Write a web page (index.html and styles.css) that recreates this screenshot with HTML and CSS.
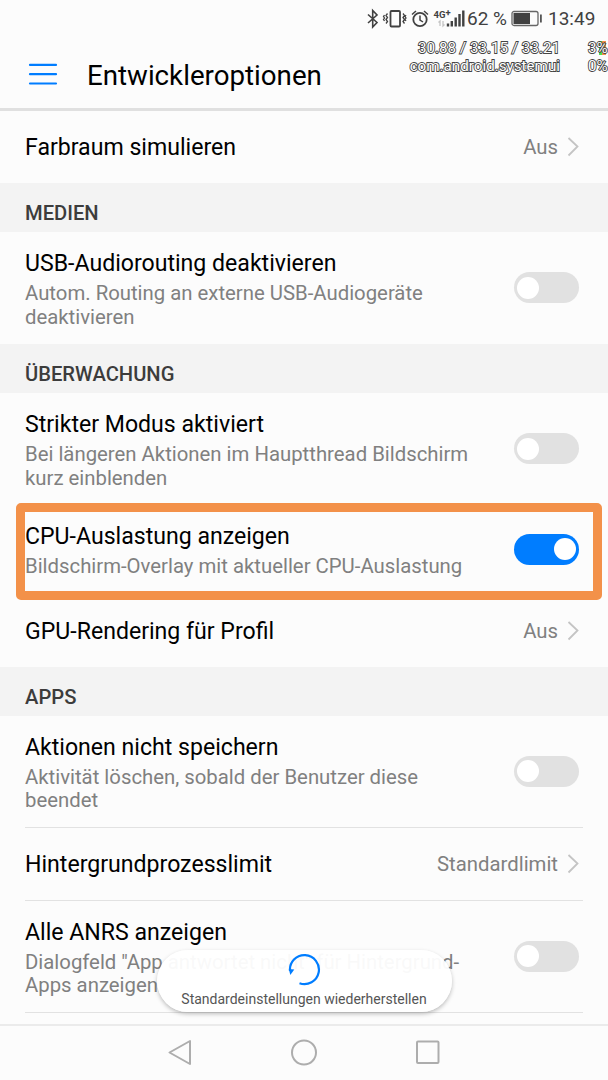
FILE: index.html
```html
<!DOCTYPE html>
<html lang="de">

<head>
    <meta charset="UTF-8">
    <meta name="viewport" content="width=device-width, initial-scale=1.0">
    <title>Entwickleroptionen</title>
    <link rel="stylesheet" href="styles.css">
</head>

<body>
    <div class="status-bar">
        <svg class="status-icons" width="106" height="24" viewBox="0 0 106 24" fill="none" stroke="#414141" stroke-width="1.6">
            <!-- Bluetooth -->
            <path d="M2 7.500l9 8-4.300 4.500V3.500L11 8l-9 8" />
            <!-- Vibration -->
            <rect x="24.500" y="4" width="9.500" height="15.500" rx="1" stroke-width="1.800" />
            <path d="M21.500 6.500l-1.500 2 1.500 2-1.500 2 1.500 2-1.500 2M18.500 8l-1 1.500 1 1.500-1 1.500 1 1.500M37 6.500l1.500 2-1.500 2 1.500 2-1.500 2 1.500 2M40 8l-1 1.500 1 1.500-1 1.500 1 1.500" stroke-width="1.300" />
            <!-- Wecker -->
            <circle cx="54" cy="12.500" r="6.700" stroke-width="1.800" />
            <path d="M54 8.500v4.500l3 2M46 7.500l4-3.500M62 7.500L58 4" stroke-width="1.500" />
            <!-- Signal -->
            <path d="M82 19.500v-3M85.800 19.500v-5.500M89.700 19.500v-9M93.500 19.500v-12.500M97.300 19.500V3.500" stroke-width="2.400" />
            <path d="M74 19v-5l-1.500 1.500M77 14v5l1.500-1.500" stroke="#c4c4c4" stroke-width="1.300" />
            <text class="network" x="67.500" y="10.500">4G<tspan dy="-2">+</tspan></text>
        </svg>
        <span class="battery-level">62 %</span>
        <svg class="battery" width="32" height="18" viewBox="0 0 32 18">
            <rect x="1" y="1.500" width="26" height="14" rx="2" fill="none" stroke="#666" stroke-width="1.300" />
            <rect x="2.500" y="3" width="16.500" height="11" fill="#414141" />
            <rect x="29" y="4.500" width="1.800" height="8" fill="#555" />
        </svg>
        <span class="clock">13:49</span>
    </div>

    <header class="app-bar">
        <svg class="menu-icon" width="30" height="24" viewBox="0 0 30 24" stroke="#007dff" stroke-width="2.200" stroke-linecap="round">
            <path d="M2 2.900h26M2 12.200h26M2 21.500h26" />
        </svg>
        <h1>Entwickleroptionen</h1>
    </header>

    <main class="settings">
        <div class="row single">
            <span class="title">Farbraum simulieren</span>
            <span class="value">Aus</span>
            <svg class="chevron" viewBox="0 0 12 20"><path d="M1.500 1L10.500 9.500l-9 9" /></svg>
        </div>

        <h2>MEDIEN</h2>
        <div class="row double">
            <div class="text">
                <div class="title">USB-Audiorouting deaktivieren</div>
                <div class="summary">Autom. Routing an externe USB-Audiogeräte<br>deaktivieren</div>
            </div>
            <span class="switch"></span>
        </div>

        <h2>ÜBERWACHUNG</h2>
        <div class="row double">
            <div class="text">
                <div class="title">Strikter Modus aktiviert</div>
                <div class="summary">Bei längeren Aktionen im Hauptthread Bildschirm<br>kurz einblenden</div>
            </div>
            <span class="switch"></span>
        </div>
        <div class="row cpu">
            <div class="text">
                <div class="title">CPU-Auslastung anzeigen</div>
                <div class="summary">Bildschirm-Overlay mit aktueller CPU-Auslastung</div>
            </div>
            <span class="switch on"></span>
            <div class="marker"></div>
        </div>
        <div class="row single gpu">
            <span class="title">GPU-Rendering für Profil</span>
            <span class="value">Aus</span>
            <svg class="chevron" viewBox="0 0 12 20"><path d="M1.500 1L10.500 9.500l-9 9" /></svg>
        </div>

        <h2>APPS</h2>
        <div class="row double divider">
            <div class="text">
                <div class="title">Aktionen nicht speichern</div>
                <div class="summary">Aktivität löschen, sobald der Benutzer diese<br>beendet</div>
            </div>
            <span class="switch"></span>
        </div>
        <div class="row single divider">
            <span class="title">Hintergrundprozesslimit</span>
            <span class="value">Standardlimit</span>
            <svg class="chevron" viewBox="0 0 12 20"><path d="M1.500 1L10.500 9.500l-9 9" /></svg>
        </div>
        <div class="row double divider">
            <div class="text">
                <div class="title">Alle ANRS anzeigen</div>
                <div class="summary">Dialogfeld "App antwortet nicht" für Hintergrund-<br>Apps anzeigen</div>
            </div>
            <span class="switch"></span>
        </div>
    </main>

    <nav class="nav-bar">
        <svg width="26" height="28" viewBox="0 0 26 28"><path d="M23 2v23L2.500 13.500z" /></svg>
        <svg width="28" height="28" viewBox="0 0 28 28"><circle cx="14" cy="13.500" r="12" /></svg>
        <svg width="26" height="26" viewBox="0 0 26 26"><rect x="2" y="1.500" width="21.500" height="21.500" rx="1" /></svg>
    </nav>

    <div class="reset-button">
        <svg width="34" height="34" viewBox="0 0 34 34">
            <path d="M12.500 31.300A14.500 14.500 0 1 0 3 19" fill="none" stroke="#007dff" stroke-width="2.200" />
            <path d="M1.800 17l5.500.500-4 5.500z" fill="#007dff" />
        </svg>
        <span>Standardeinstellungen wiederherstellen</span>
    </div>

    <div class="cpu-overlay">
        <div class="process"><span>30.88 / 33.15 / 33.21</span><span>com.android.systemui</span></div>
        <div class="load"><span>3%</span><span>0%</span></div>
        <i class="graph"></i>
    </div>
</body>
</html>
```

FILE: styles.css
```css
:root {
    --bg: #fcfcfc;
    --section-bg: #f3f3f3;
    --blue: #007dff;
    --grey-text: #808080;
    --line: #e2e2e2;
    --marker: #f39149;
}

* {
    box-sizing: border-box;
}

body {
    margin: 0;
    position: relative;
    display: flex;
    flex-direction: column;
    height: 1080px;
    overflow: hidden;
    background: var(--bg);
    color: #000;
    font-family: Roboto, sans-serif;
}

svg {
    display: block;
    flex: none;
}

.status-bar {
    display: flex;
    align-items: center;
    height: 37px;
    padding-left: 366px;
    color: #414141;
    font-size: 19px;
    white-space: nowrap;
}

.network {
    fill: #414141;
    stroke: none;
    font-size: 9.5px;
    font-weight: 700;
}

.battery-level {
    width: 39px;
    margin-left: -5px;
}

.battery {
    margin-left: 5px;
}

.clock {
    margin-left: 5px;
}

.app-bar {
    display: flex;
    align-items: center;
    height: 74px;
    padding: 3px 0 0 28px;
    border-bottom: 3px solid #e0e0e0;
}

h1 {
    margin: 2px 0 0 29px;
    font-size: 27.7px;
    font-weight: 400;
}

.settings {
    flex: 1;
}

h2 {
    height: 49px;
    margin: 0;
    padding: 6px 25px 0;
    background: var(--section-bg);
    color: #3c3c3c;
    font-size: 20.2px;
    font-weight: 500;
    line-height: 49px;
}

.row {
    position: relative;
    display: flex;
    align-items: center;
    margin: 0 25px;
}

.single {
    height: 72px;
}

.double {
    height: 112px;
}

.cpu {
    height: 89px;
}

.gpu {
    height: 73px;
}

.divider {
    border-bottom: 1px solid var(--line);
}

.single.divider {
    height: 73px;
}

.text {
    flex: 1;
    padding-top: 2px;
}

.title {
    flex: 1;
    font-size: 23.1px;
    line-height: 30px;
    white-space: nowrap;
}

.single .title {
    padding-top: 2px;
}

.summary {
    margin-top: 3px;
    color: var(--grey-text);
    font-size: 20.34px;
    line-height: 23.5px;
    white-space: nowrap;
}

.value {
    margin-right: 9px;
    color: var(--grey-text);
    font-size: 20.34px;
}

.chevron {
    width: 12px;
    height: 20px;
    margin-right: 4px;
    fill: none;
    stroke: #c4c4c4;
    stroke-width: 1.8;
}

.switch {
    flex: none;
    width: 65px;
    height: 31px;
    margin: 0 4.5px 1px 0;
    padding: 4.5px 3px;
    border-radius: 16px;
    background: #e1e1e1;
}

.switch::before {
    content: "";
    display: block;
    width: 22px;
    height: 22px;
    border-radius: 50%;
    background: #fff;
}

.switch.on {
    background: var(--blue);
}

.switch.on::before {
    margin-left: auto;
}

.marker {
    position: absolute;
    top: -2px;
    left: -9px;
    width: 586px;
    height: 97px;
    border: 9px solid var(--marker);
    border-radius: 5px;
}

.nav-bar {
    display: flex;
    align-items: center;
    justify-content: space-between;
    height: 56px;
    padding: 0 167px;
    border-top: 2px solid #ebebeb;
    background: var(--bg);
}

.nav-bar svg {
    fill: none;
    stroke: #adadad;
    stroke-width: 2;
    stroke-linejoin: round;
}

.reset-button {
    position: absolute;
    top: 950px;
    left: 156.5px;
    display: flex;
    flex-direction: column;
    align-items: center;
    width: 295px;
    height: 62px;
    padding-top: 2px;
    border-radius: 31px;
    background: rgba(255, 255, 255, 0.95);
    box-shadow: 0 2px 4px rgba(0, 0, 0, 0.25);
    color: #555;
    font-size: 14px;
    line-height: 26px;
    white-space: nowrap;
}

.cpu-overlay {
    position: absolute;
    top: 39px;
    right: 0;
    display: flex;
    gap: 28px;
    width: 200px;
    color: #fff;
    font-size: 15.2px;
    line-height: 18px;
    -webkit-text-stroke: 1.8px #444;
    paint-order: stroke fill;
    white-space: nowrap;
}

.process,
.load {
    display: flex;
    flex-direction: column;
}

.process {
    width: 152px;
    align-items: flex-end;
}

.graph {
    position: absolute;
    top: 2px;
    right: 2px;
    z-index: -1;
    width: 7px;
    height: 14px;
    background: linear-gradient(90deg, #4be04b 45%, #f39149 45%);
}
```
